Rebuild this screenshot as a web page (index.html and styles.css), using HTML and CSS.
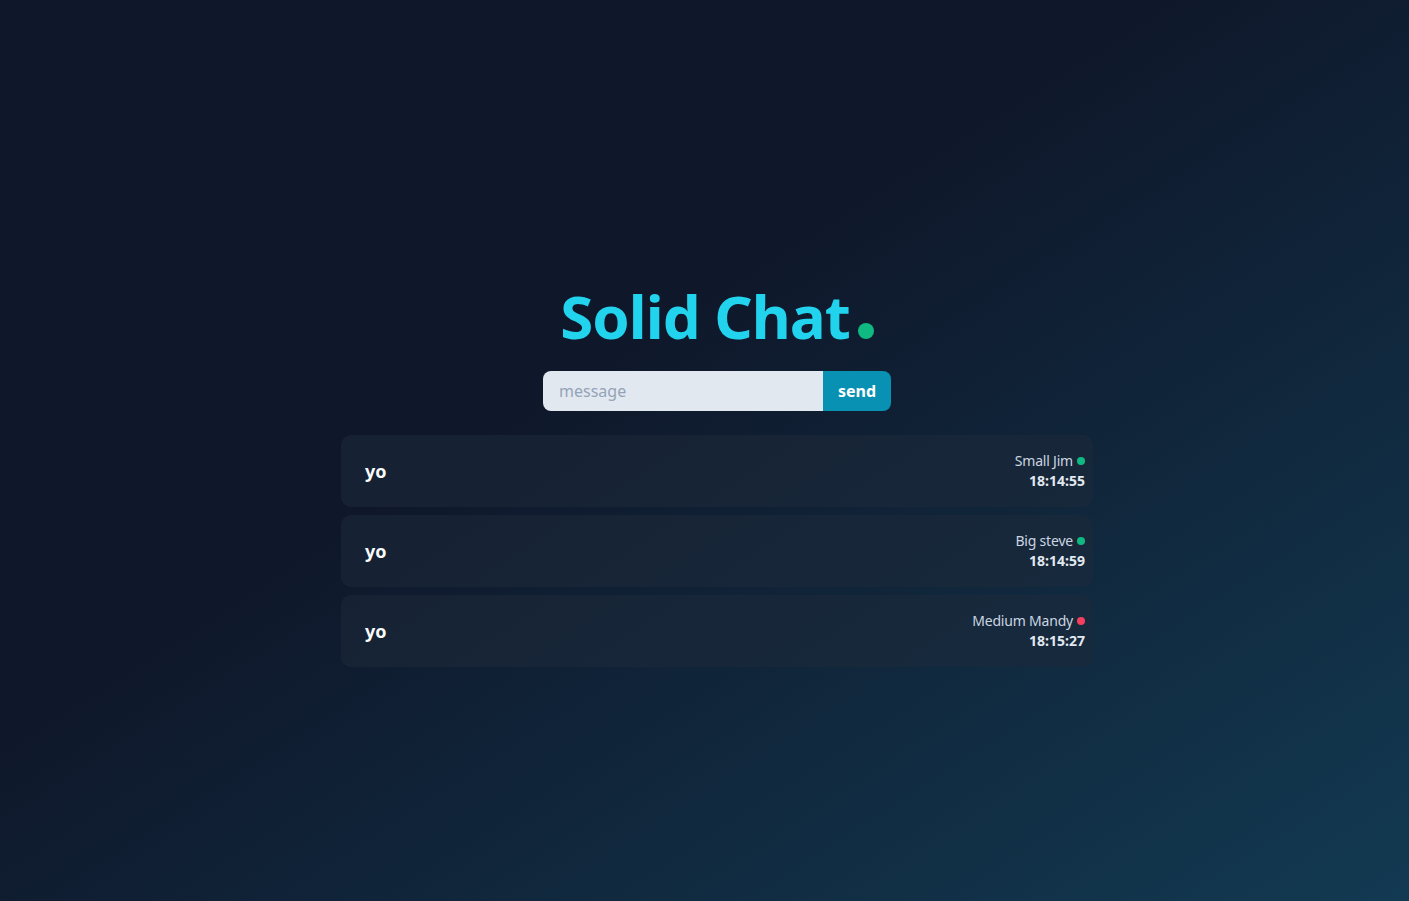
FILE: index.html
```html
<!DOCTYPE html>
<html lang="en">
<head>
<meta charset="utf-8">
<title>Solid Chat</title>
<link rel="stylesheet" href="styles.css">
</head>
<body>
<main class="app">
  <h1 class="title">Solid Chat<span class="title-dot"></span></h1>
  <form class="composer">
    <input class="composer-input" type="text" placeholder="message">
    <button class="composer-send" type="button">send</button>
  </form>
  <ul class="messages">
    <li class="message">
      <span class="message-text">yo</span>
      <div class="message-meta">
        <div class="message-author">Small Jim <span class="status status-online"></span></div>
        <div class="message-time">18:14:55</div>
      </div>
    </li>
    <li class="message">
      <span class="message-text">yo</span>
      <div class="message-meta">
        <div class="message-author">Big steve <span class="status status-online"></span></div>
        <div class="message-time">18:14:59</div>
      </div>
    </li>
    <li class="message">
      <span class="message-text">yo</span>
      <div class="message-meta">
        <div class="message-author">Medium Mandy <span class="status status-offline"></span></div>
        <div class="message-time">18:15:27</div>
      </div>
    </li>
  </ul>
</main>
</body>
</html>
```
FILE: styles.css
```css
* { box-sizing: border-box; }
html, body { margin: 0; height: 100%; }
body {
  font-family: "Noto Sans", "DejaVu Sans", sans-serif;
  background: linear-gradient(to bottom right, #0f172a 0%, #0f172a 40%, #123a52 100%);
  color: #f1f5f9;
  min-height: 100vh;
}
.app {
  display: flex;
  flex-direction: column;
  align-items: center;
  padding-top: 280px;
  padding-left: 25px;
}
.title {
  margin: 0;
  font-size: 60px;
  line-height: 72px;
  font-weight: 700;
  color: #22d3ee;
  letter-spacing: -1px;
  display: flex;
  align-items: baseline;
}
.title-dot {
  width: 16px;
  height: 16px;
  border-radius: 50%;
  background: #10b981;
  margin-left: 8px;
  display: inline-block;
}
.composer {
  display: flex;
  margin-top: 19px;
  width: 348px;
  height: 40px;
}
.composer-input {
  flex: 1;
  border: 0;
  background: #e2e8f0;
  border-radius: 8px 0 0 8px;
  padding: 0 16px;
  font: inherit;
  font-size: 16px;
  color: #0f172a;
  outline: none;
}
.composer-input::placeholder { color: #94a3b8; }
.composer-send {
  width: 68px;
  border: 0;
  background: #0891b2;
  color: #ffffff;
  font: inherit;
  font-size: 16px;
  font-weight: 700;
  border-radius: 0 8px 8px 0;
}
.messages {
  list-style: none;
  margin: 24px 0 0;
  padding: 0;
  width: 752px;
  display: flex;
  flex-direction: column;
  gap: 8px;
}
.message {
  height: 72px;
  display: flex;
  align-items: center;
  justify-content: space-between;
  padding: 0 8px 0 24px;
  border-radius: 10px;
  background: rgba(30, 41, 59, 0.55);
}
.message-text {
  font-size: 18px;
  font-weight: 700;
  color: #f8fafc;
}
.message-meta {
  display: flex;
  flex-direction: column;
  align-items: flex-end;
  font-size: 14px;
  line-height: 20px;
}
.message-author {
  color: #cbd5e1;
  display: flex;
  align-items: center;
  gap: 4px;
  letter-spacing: -0.2px;
}
.message-time {
  color: #e2e8f0;
  font-weight: 700;
}
.status {
  width: 8px;
  height: 8px;
  border-radius: 50%;
  display: inline-block;
}
.status-online { background: #10b981; }
.status-offline { background: #f43f5e; }
```
